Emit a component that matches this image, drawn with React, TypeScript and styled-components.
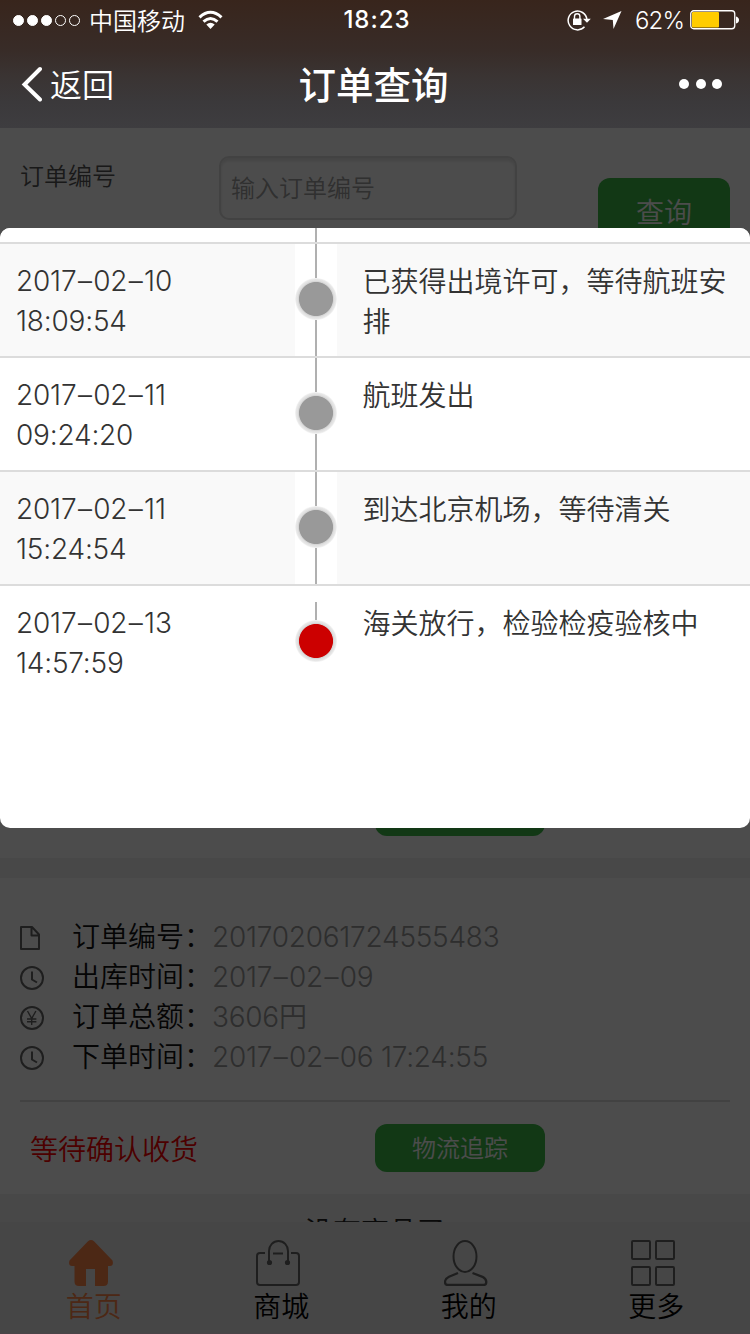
import React from "react";
import styled, { createGlobalStyle } from "styled-components";

const FONT = 'Inter, "Noto Sans CJK SC", sans-serif';

const GlobalStyle = createGlobalStyle`
  * { box-sizing: border-box; }
  body {
    margin: 0;
    font-family: ${FONT};
    font-weight: 350;
    background: #fff;
  }
`;

const Screen = styled.div`
  position: relative;
  width: 750px;
  height: 1334px;
  display: flex;
  flex-direction: column;
  overflow: hidden;
  background: #f0f0f0;
`;

const Header = styled.header`
  flex: none;
  height: 128px;
  color: #fff;
  background: linear-gradient(#38251c 0, #382c28 40%, #3a3433 60%, #3b393b 80%, #3e3d40 100%);
`;

const StatusBar = styled.div`
  display: grid;
  grid-template-columns: 1fr auto 1fr;
  align-items: center;
  height: 40px;
  padding: 0 11px 0 13px;
`;

const StatusGroup = styled.div<{ $end?: boolean }>`
  display: flex;
  align-items: center;
  justify-content: ${(p) => (p.$end ? "flex-end" : "flex-start")};
  height: 40px;
  font-size: 24px;
  white-space: nowrap;
`;

const Signal = styled.div`
  display: flex;
  gap: 3px;
  margin-right: 9px;
`;

const SignalDot = styled.span<{ $on: boolean }>`
  width: 11px;
  height: 11px;
  border-radius: 50%;
  border: 1px solid #fff;
  background: ${(p) => (p.$on ? "#fff" : "transparent")};
`;

const Carrier = styled.span`
  margin-right: 13px;
  padding-top: 4px;
  line-height: 36px;
`;

const Clock = styled.div`
  margin-left: 2px;
  font-size: 24px;
  font-weight: 550;
  line-height: 40px;
  letter-spacing: 1px;
`;

const Percent = styled.span`
  margin: 0 6px 0 13px;
  padding-top: 2px;
  font-size: 24px;
  line-height: 38px;
  letter-spacing: -0.9px;
`;

const NavBar = styled.nav`
  display: grid;
  grid-template-columns: 1fr auto 1fr;
  align-items: center;
  height: 88px;
  padding: 0 28px 0 20px;
`;

const BackButton = styled.div`
  display: flex;
  align-items: center;
  gap: 8px;
  font-size: 32px;

  span {
    padding-top: 4px;
    line-height: 84px;
  }
`;

const Title = styled.h1`
  margin: 0 0 0 5px;
  padding-top: 4px;
  font-size: 37.5px;
  font-weight: 500;
  line-height: 84px;
`;

const MoreDots = styled.div`
  display: flex;
  justify-content: flex-end;
  gap: 6.5px;

  i {
    width: 10px;
    height: 10px;
    border-radius: 50%;
    background: #fff;
  }
`;

const Content = styled.main`
  position: relative;
  flex: 1;
  display: flex;
  flex-direction: column;
  min-height: 0;
`;

const Page = styled.div`
  flex: 1;
  min-height: 0;
  overflow: hidden;
`;

const SearchCard = styled.section`
  display: flex;
  align-items: flex-start;
  height: 730px;
  padding: 28px 20px 0;
  background: #fff;
  position: relative;
`;

const FieldLabel = styled.label`
  width: 199px;
  padding-top: 1px;
  font-size: 24px;
  line-height: 40px;
  color: #555;
`;

const FieldInput = styled.input`
  width: 298px;
  height: 64px;
  padding: 0 10px;
  border: 2px solid #dcdcdc;
  border-radius: 10px;
  background: #fff;
  box-shadow: inset 0 3px 3px rgba(0, 0, 0, 0.1);
  font: 350 24px ${FONT};
  outline: none;

  &::placeholder { color: #a0a0a0; opacity: 1; }
`;

const GreenButton = styled.button<{ $w: number; $h: number; $size: number }>`
  width: ${(p) => p.$w}px;
  height: ${(p) => p.$h}px;
  padding: 2px 0 0;
  border: 0;
  border-radius: 12px;
  background: #3cbb49;
  color: #fff;
  font: 350 ${(p) => p.$size}px/${(p) => p.$h - 2}px ${FONT};
`;

const SearchAction = styled.div`
  margin: 22px 0 0 auto;
`;

const EarlierAction = styled.div`
  position: absolute;
  left: 375px;
  bottom: 22px;
  display: flex;
`;

const OrderCard = styled.section`
  height: 316px;
  margin-top: 20px;
  padding: 39px 20px 0;
  background: #fff;
`;

const InfoRow = styled.div`
  display: flex;
  align-items: center;
  height: 40px;
  font-size: 28px;
  line-height: 40px;
`;

const InfoIcon = styled.span`
  display: flex;
  width: 52px;
  padding-top: 2px;
`;

const InfoLabel = styled.span`
  width: 140px;
  color: #111;
  white-space: nowrap;
`;

const InfoValue = styled.span`
  color: #999;
  letter-spacing: -0.25px;
`;

const Dash = styled.span`
  margin: 0 1.5px;
`;

const OrderFooter = styled.div`
  display: flex;
  align-items: center;
  height: 94px;
  margin-top: 23px;
  padding-left: 10px;
  border-top: 2px solid #dcdcdc;
`;

const OrderState = styled.span`
  width: 345px;
  font-size: 28px;
  color: #f00;
`;

const EmptyNote = styled.p`
  margin: 18px 0 0;
  text-align: center;
  font-size: 28px;
  line-height: 40px;
  color: #222;
`;

const TabBar = styled.footer`
  flex: none;
  display: grid;
  grid-template-columns: repeat(4, 1fr);
  height: 112px;
  background: #ebebeb;
  border-bottom: 1px solid #f8e2ee;
`;

const Tab = styled.div<{ $active?: boolean }>`
  display: flex;
  flex-direction: column;
  align-items: center;
  padding-top: 18px;
  font-size: 28px;
  line-height: 40px;
  color: ${(p) => (p.$active ? "#ff8549" : "#000")};

  svg { margin: 0 6px 1px 0; }
`;

const Overlay = styled.div`
  position: absolute;
  inset: 0;
  padding-top: 100px;
  background: rgba(0, 0, 0, 0.7);
`;

const Dialog = styled.div`
  height: 600px;
  overflow: hidden;
  border-radius: 10px;
  background: #fff;
`;

const Step = styled.div<{ $striped?: boolean; $tail?: boolean }>`
  display: grid;
  grid-template-columns: 295px 42px 1fr;
  height: ${(p) => (p.$tail ? 14 : 114)}px;
  border-top: ${(p) => (p.$tail ? "0" : "2px solid #dcdcdc")};
  color: #333;
  font-size: 28px;
  line-height: 40px;

  > :first-child, > :last-child {
    background: ${(p) => (p.$striped ? "#f9f9f9" : "#fff")};
  }
`;

const StepTime = styled.div`
  padding: 17px 16px 0;
  letter-spacing: -0.2px;
`;

const StepText = styled.div`
  padding: 18px 20px 0 25.5px;
`;

const Rail = styled.div<{ $last?: boolean }>`
  display: flex;
  flex-direction: column;
  align-items: center;
  padding-top: ${(p) => (p.$last ? 16 : 0)}px;
`;

const RailLine = styled.span<{ $h: number }>`
  width: 2px;
  height: ${(p) => p.$h}px;
  background: #b0b0b0;
`;

const RailDot = styled.span<{ $color: string }>`
  width: 42px;
  height: 42px;
  border-radius: 50%;
  background: radial-gradient(
    circle closest-side,
    ${(p) => p.$color} 16.6px,
    #d4d4d4 17.4px,
    #e2e2e2 18.6px,
    #e6e6e6 19.6px,
    #f6f6f6 21px
  );
`;

const steps = [
  { date: "2017–02–10", time: "18:09:54", text: "已获得出境许可，等待航班安排" },
  { date: "2017–02–11", time: "09:24:20", text: "航班发出" },
  { date: "2017–02–11", time: "15:24:54", text: "到达北京机场，等待清关" },
  { date: "2017–02–13", time: "14:57:59", text: "海关放行，检验检疫验核中" },
];

const Figures = ({ value }: { value: string }) => (
  <>
    {value.split("–").map((part, i) => (
      <React.Fragment key={i}>
        {i > 0 && <Dash>–</Dash>}
        {part}
      </React.Fragment>
    ))}
  </>
);

const ClockIcon = () => (
  <svg width="24" height="24" viewBox="0 0 24 24" fill="none" stroke="#666" strokeWidth="2">
    <circle cx="12" cy="12" r="11" />
    <path d="M12 5.5v8l5 3" />
  </svg>
);

const FileIcon = () => (
  <svg width="24" height="24" viewBox="0 0 24 24" fill="none" stroke="#666" strokeWidth="2" strokeLinejoin="round">
    <path d="M1 1H12L19 8.5V23H1ZM11.500 1.500V9.500H18.500" />
  </svg>
);

const YenIcon = () => (
  <svg width="24" height="24" viewBox="0 0 24 24" fill="none" stroke="#666">
    <circle cx="12" cy="12" r="11" strokeWidth="2" />
    <path d="M7.5 5l4.200 7.500 4.200-7.500M11.700 12.500V19M7 13h9.400M7 15.800h9.400" strokeWidth="1.400" />
  </svg>
);

const orderInfo = [
  { icon: <FileIcon />, label: "订单编号：", value: "201702061724555483" },
  { icon: <ClockIcon />, label: "出库时间：", value: "2017–02–09" },
  { icon: <YenIcon />, label: "订单总额：", value: "3606円" },
  { icon: <ClockIcon />, label: "下单时间：", value: "2017–02–06 17:24:55" },
];

const HomeIcon = () => (
  <svg width="44" height="46" viewBox="0 0 44 46" fill="#ff8549">
    <path d="M19 1.200Q22-1.200 25 1.200L43.500 20.500Q45 25.500 41 26H39V41.500Q39 46 34.500 46H26V29H17V46H10Q5.500 46 5.500 41.500V26H3Q-1 25.500 .5 20.500Z" />
  </svg>
);

const BagIcon = () => (
  <svg width="44" height="46" viewBox="0 0 44 46" fill="none" stroke="#666" strokeWidth="2">
    <path d="M9 13H4Q1 13 1 16V42Q1 45 4 45H40Q43 45 43 42V16Q43 13 40 13H35M17 13.500H27" />
    <path d="M13 22V11A9.500 10 0 0 1 32 11V22" />
    <circle cx="13.500" cy="22.500" r="1.600" fill="#666" />
    <circle cx="31.500" cy="22.500" r="1.600" fill="#666" />
  </svg>
);

const UserIcon = () => (
  <svg width="44" height="46" viewBox="0 0 44 46" fill="none" stroke="#666" strokeWidth="2">
    <ellipse cx="21" cy="16.500" rx="11.500" ry="15.500" />
    <path d="M14 33L5 36.800Q1 38.800 1 42Q1 45 4 45H39.500Q42.300 45 42.300 42Q42.300 38.800 38.500 36.800L28.500 33" strokeWidth="2.300" />
  </svg>
);

const GridIcon = () => (
  <svg width="44" height="46" viewBox="0 0 44 46" fill="none" stroke="#666" strokeWidth="2">
    <rect x="1" y="1" width="18" height="18" rx="1" />
    <rect x="25" y="1" width="18" height="18" rx="1" />
    <rect x="1" y="27" width="18" height="18" rx="1" />
    <rect x="25" y="27" width="18" height="18" rx="1" />
  </svg>
);

const tabs = [
  { label: "首页", icon: <HomeIcon />, active: true },
  { label: "商城", icon: <BagIcon /> },
  { label: "我的", icon: <UserIcon /> },
  { label: "更多", icon: <GridIcon /> },
];

const WifiIcon = () => (
  <svg width="25" height="20" viewBox="0 0 25 20" fill="none" stroke="#fff" strokeWidth="3">
    <path d="M1.500 7.300Q12.500-2.700 23.500 7.300M5.500 11.600Q12.500 5.400 19.500 11.600" />
    <path d="M8.300 14.500Q12.500 11 16.700 14.500L12.500 19Z" fill="#fff" stroke="none" />
  </svg>
);

const LockIcon = () => (
  <svg width="24" height="22" viewBox="0 0 24 22" fill="none" stroke="#fff">
    <path d="M17.500 17.800A9.400 9.400 0 1 1 19.900 10.500" strokeWidth="1.500" />
    <path d="M16 9.800H23.800L20 13.800Z" fill="#fff" stroke="none" />
    <path d="M7.500 10V7.500A2.700 2.700 0 0 1 12.900 7.500V10" strokeWidth="1.400" />
    <rect x="6" y="9.500" width="8.500" height="6.500" rx=".6" fill="#fff" stroke="none" />
  </svg>
);

const ArrowSvg = styled.svg`
  margin-left: 12px;
`;

const LocationIcon = () => (
  <ArrowSvg width="19" height="18" viewBox="0 0 19 18" fill="#fff">
    <path d="M18.500 0L10.500 18L9.800 9L0 8Z" />
  </ArrowSvg>
);

const BatteryIcon = () => (
  <svg width="49" height="20" viewBox="0 0 49 20" fill="none">
    <rect x=".75" y=".75" width="44" height="18" rx="3" stroke="#fff" strokeWidth="1.300" />
    <rect x="2" y="2" width="27" height="15.500" rx="1" fill="#fc0" />
    <path d="M46 6.500Q49 7.500 49 10T46 13.500Z" fill="#fff" />
  </svg>
);

export default function App() {
  return (
    <Screen>
      <GlobalStyle />
      <Header>
        <StatusBar>
          <StatusGroup>
            <Signal>
              {[1, 2, 3, 4, 5].map((n) => (
                <SignalDot key={n} $on={n <= 3} />
              ))}
            </Signal>
            <Carrier>中国移动</Carrier>
            <WifiIcon />
          </StatusGroup>
          <Clock>18:23</Clock>
          <StatusGroup $end>
            <LockIcon />
            <LocationIcon />
            <Percent>62%</Percent>
            <BatteryIcon />
          </StatusGroup>
        </StatusBar>
        <NavBar>
          <BackButton>
            <svg width="22" height="36" viewBox="0 0 22 36" fill="none" stroke="#fff" strokeWidth="4" strokeLinecap="round">
              <path d="M20 3L4.500 18.500L20 33.500" />
            </svg>
            <span>返回</span>
          </BackButton>
          <Title>订单查询</Title>
          <MoreDots>
            <i />
            <i />
            <i />
          </MoreDots>
        </NavBar>
      </Header>
      <Content>
        <Page>
          <SearchCard>
            <FieldLabel>订单编号</FieldLabel>
            <FieldInput placeholder="输入订单编号" />
            <SearchAction>
              <GreenButton $w={132} $h={68} $size={28}>查询</GreenButton>
            </SearchAction>
            <EarlierAction>
              <GreenButton $w={170} $h={48} $size={24} />
            </EarlierAction>
          </SearchCard>
          <OrderCard>
            {orderInfo.map((row) => (
              <InfoRow key={row.label}>
                <InfoIcon>{row.icon}</InfoIcon>
                <InfoLabel>{row.label}</InfoLabel>
                <InfoValue>
                  <Figures value={row.value} />
                </InfoValue>
              </InfoRow>
            ))}
            <OrderFooter>
              <OrderState>等待确认收货</OrderState>
              <GreenButton $w={170} $h={48} $size={24}>物流追踪</GreenButton>
            </OrderFooter>
          </OrderCard>
          <EmptyNote>没有商品了</EmptyNote>
        </Page>
        <TabBar>
          {tabs.map((tab) => (
            <Tab key={tab.label} $active={tab.active}>
              {tab.icon}
              {tab.label}
            </Tab>
          ))}
        </TabBar>
        <Overlay>
          <Dialog>
            <Step $tail>
              <div />
              <Rail>
                <RailLine $h={14} />
              </Rail>
              <div />
            </Step>
            {steps.map((step, i) => {
              const last = i === steps.length - 1;
              return (
                <Step key={step.time} $striped={i % 2 === 0}>
                  <StepTime>
                    <Figures value={step.date} />
                    <br />
                    {step.time}
                  </StepTime>
                  <Rail $last={last}>
                    <RailLine $h={last ? 18 : 34} />
                    <RailDot $color={last ? "#c00" : "#999"} />
                    {!last && <RailLine $h={36} />}
                  </Rail>
                  <StepText>{step.text}</StepText>
                </Step>
              );
            })}
          </Dialog>
        </Overlay>
      </Content>
    </Screen>
  );
}
